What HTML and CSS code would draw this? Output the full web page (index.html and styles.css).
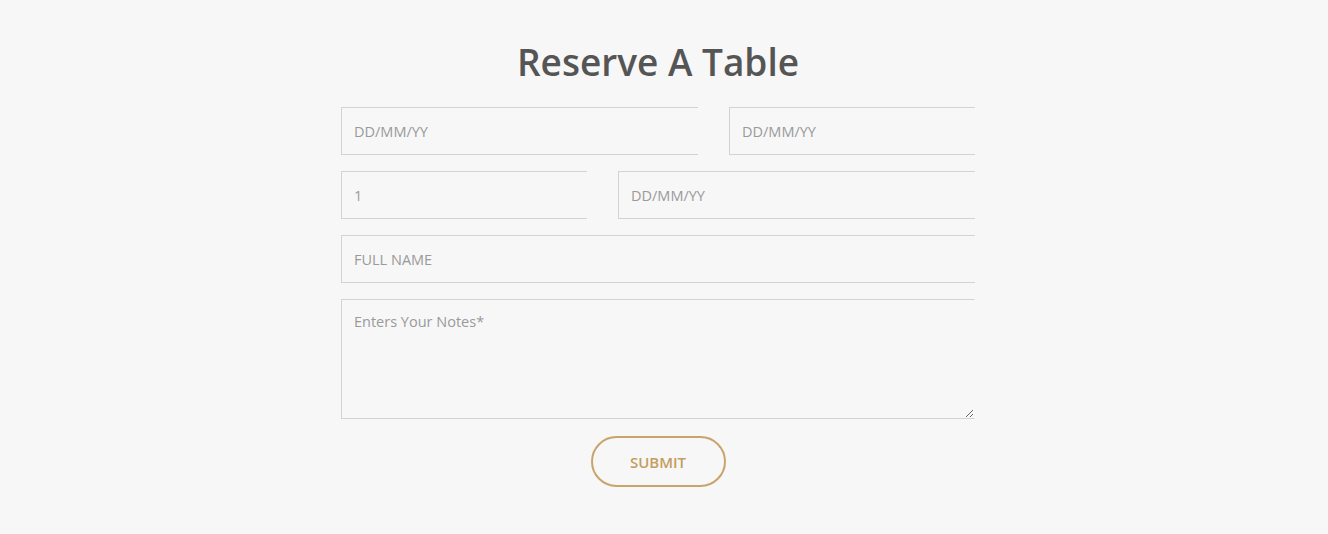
FILE: index.html
```html
<!DOCTYPE html>
<html>
<head>
<meta charset="utf-8">
<link rel="stylesheet" href="styles.css">
</head>
<body>
<section class="reserve">
  <h2 class="title">Reserve A Table</h2>
  <form class="form">
    <div class="row">
      <div class="cell wide"><input class="field" type="text" placeholder="DD/MM/YY"></div>
      <div class="cell narrow"><input class="field" type="text" placeholder="DD/MM/YY"></div>
    </div>
    <div class="row">
      <div class="cell narrow"><input class="field" type="text" placeholder="1"></div>
      <div class="cell wide"><input class="field" type="text" placeholder="DD/MM/YY"></div>
    </div>
    <div class="row">
      <div class="cell full"><input class="field" type="text" placeholder="FULL NAME"></div>
    </div>
    <div class="row">
      <div class="cell full area"><textarea class="field notes" placeholder="Enters Your Notes*"></textarea></div>
    </div>
    <div class="actions">
      <button class="submit" type="button">SUBMIT</button>
    </div>
  </form>
</section>
</body>
</html>
```
FILE: styles.css
```css
html, body {
  margin: 0;
  padding: 0;
  background: #f7f7f7;
  font-family: "Open Sans", "Noto Sans", sans-serif;
}
.reserve {
  display: flex;
  flex-direction: column;
  align-items: center;
  padding-top: 36px;
  padding-right: 12px;
}
.title {
  margin: 0 0 19px 0;
  font-size: 37px;
  line-height: 52px;
  font-weight: 600;
  color: #555555;
}
.form {
  width: 634px;
  display: flex;
  flex-direction: column;
  gap: 16px;
}
.row {
  display: flex;
  gap: 31px;
}
.cell {
  overflow: hidden;
  display: flex;
}
.wide { width: 357px; }
.narrow { width: 246px; }
.full { width: 634px; }
.field {
  box-sizing: border-box;
  flex: none;
  width: calc(100% + 20px);
  height: 48px;
  border: 1px solid #d3d3d3;
  background: transparent;
  padding: 0 12px;
  font-family: "Open Sans", "Noto Sans", sans-serif;
  font-size: 14.5px;
  color: #555;
  outline: none;
}
.field::placeholder {
  color: #9a9a9a;
}
.area {
  width: 635px;
}
.notes {
  width: 100%;
  height: 120px;
  padding: 12px 12px;
  resize: vertical;
  border-right-color: transparent;
}
.actions {
  display: flex;
  justify-content: center;
  padding-top: 1px;
}
.submit {
  width: 135px;
  height: 51px;
  border: 2px solid #c9a46a;
  border-radius: 26px;
  background: transparent;
  color: #c49d60;
  font-family: "Open Sans", "Noto Sans", sans-serif;
  font-weight: 600;
  font-size: 15px;
}
```
